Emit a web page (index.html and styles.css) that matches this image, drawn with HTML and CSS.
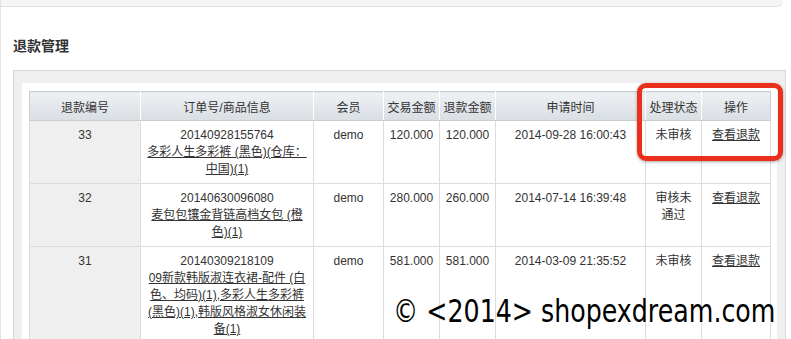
FILE: index.html
```html
<!DOCTYPE html>
<html lang="zh-CN">
<head>
  <meta charset="UTF-8">
  <title>退款管理</title>
  <link rel="stylesheet" href="styles.css">
</head>
<body>
  <div class="page">
    <div class="topbar"></div>
    <h2 class="title">退款管理</h2>

    <div class="panel">
      <div class="panel-inner">
        <table class="refunds">
          <colgroup>
            <col style="width:111px">
            <col style="width:173px">
            <col style="width:70px">
            <col style="width:56px">
            <col style="width:56px">
            <col style="width:150px">
            <col style="width:56px">
            <col style="width:69px">
          </colgroup>
          <thead>
            <tr>
              <th>退款编号</th>
              <th>订单号/商品信息</th>
              <th>会员</th>
              <th>交易金额</th>
              <th>退款金额</th>
              <th>申请时间</th>
              <th>处理状态</th>
              <th>操作</th>
            </tr>
          </thead>
          <tbody>
            <tr>
              <td class="id">33</td>
              <td>20140928155764<br><a href="#">多彩人生多彩裤 (黑色)(仓库：中国)(1)</a></td>
              <td>demo</td>
              <td>120.000</td>
              <td>120.000</td>
              <td>2014-09-28 16:00:43</td>
              <td>未审核</td>
              <td><a href="#">查看退款</a></td>
            </tr>
            <tr>
              <td class="id">32</td>
              <td>20140630096080<br><a href="#">麦包包镶金背链高档女包 (橙色)(1)</a></td>
              <td>demo</td>
              <td>280.000</td>
              <td>260.000</td>
              <td>2014-07-14 16:39:48</td>
              <td>审核未通过</td>
              <td><a href="#">查看退款</a></td>
            </tr>
            <tr>
              <td class="id">31</td>
              <td>20140309218109<br><a href="#">09新款韩版淑连衣裙-配件 (白色、均码)(1),多彩人生多彩裤(黑色)(1),韩版风格淑女休闲装备(1)</a></td>
              <td>demo</td>
              <td>581.000</td>
              <td>581.000</td>
              <td>2014-03-09 21:35:52</td>
              <td>未审核</td>
              <td><a href="#">查看退款</a></td>
            </tr>
          </tbody>
        </table>
      </div>
    </div>

    <!-- red marker around status + action columns -->
    <div class="highlight"></div>
    <div class="watermark">© &lt;2014&gt; shopexdream.com</div>
  </div>
</body>
</html>
```

FILE: styles.css
```css
body {
  margin: 0;
  background: #fff;
  color: #333;
  font-family: "Liberation Sans", Arial, "Noto Sans CJK SC", sans-serif;
  font-size: 12px;
}
.page {
  position: relative;
  height: 339px;
  overflow: hidden;
  border-left: 1px solid #e2e2e2;
}
.topbar {
  height: 6px;
  margin-right: 8px;
  background: #f5f5f5;
  border-bottom: 1px solid #e0e0e0;
  border-bottom-right-radius: 6px;
}
.title {
  margin: 28px 0 0 12px;
  font-size: 14px;
  line-height: 20px;
  font-weight: bold;
  color: #333;
  font-family: "Noto Sans CJK SC", sans-serif;
}
.panel {
  margin: 15px 5px 0 12px;
  padding: 12px 8px 0;
  background: #efefef;
  border: 1px solid #d6d6d6;
  border-bottom: none;
}
.panel-inner {
  background: #fff;
  padding: 8px 7px 0;
}
.refunds {
  width: 741px;
  table-layout: fixed;
  border-collapse: collapse;
}
.refunds th {
  height: 28px;
  padding: 0 2px;
  font-weight: normal;
  color: #333;
  white-space: nowrap;
  background: linear-gradient(#eef1f4, #d9dee3);
  border: 1px solid #c9cdd1;
  border-right-color: #fff;
}
.refunds th:last-child {
  border-right-color: #c9cdd1;
}
.refunds td {
  padding: 6px 5px 5px;
  line-height: 17px;
  text-align: center;
  vertical-align: top;
  border: 1px solid #dcdcdc;
}
.refunds td.id {
  background: #efefef;
}
.refunds a {
  color: #333;
  text-decoration: underline;
}
.highlight {
  position: absolute;
  left: 636px;
  top: 83px;
  width: 136px;
  height: 68px;
  border: 5px solid #ea2f1c;
  border-radius: 9px;
  box-shadow: 0 1px 3px rgba(0,0,0,0.35);
}
.watermark {
  position: absolute;
  left: 392px;
  top: 292px;
  font-family: "DejaVu Sans", sans-serif;
  font-size: 32px;
  color: #000;
  white-space: nowrap;
  transform-origin: left top;
  transform: scaleX(0.79);
}
```
